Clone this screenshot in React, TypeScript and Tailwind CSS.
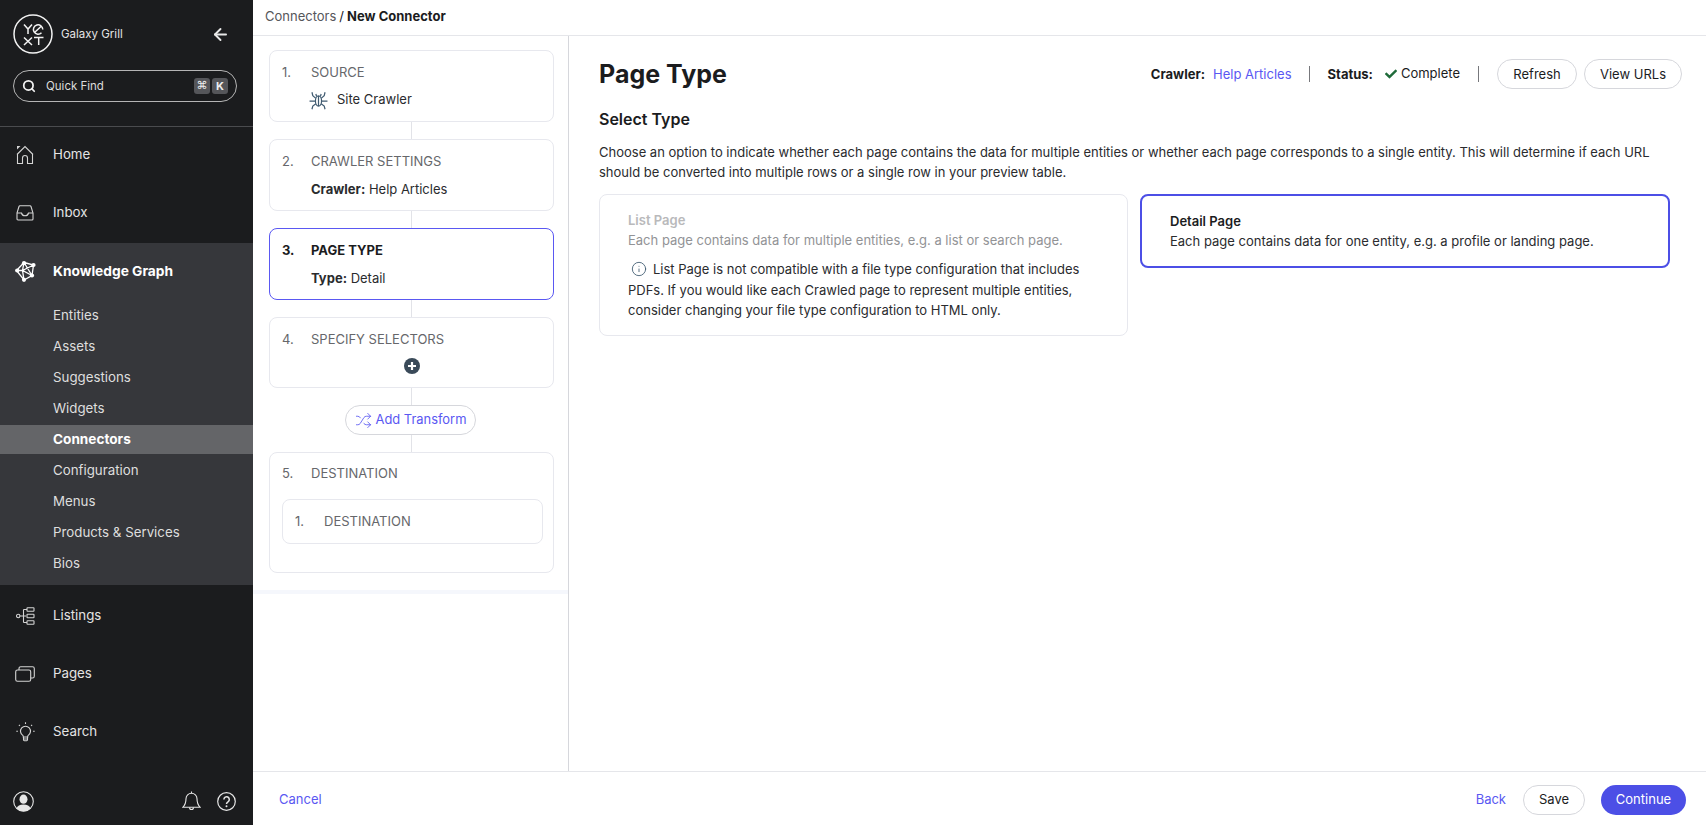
import type { ReactNode } from 'react'
import { ArrowLeft, Info, Search, Shuffle } from 'lucide-react'
import { FaCheck } from 'react-icons/fa'

const YextLogo = () => (
  <svg width="40" height="40" viewBox="0 0 40 40" fill="none" stroke="#f2f2f2" strokeWidth="1.5">
    <circle cx="20" cy="20" r="19" />
    <path d="M11 10.500l4 4.500 4-4.500M15 15v5" />
    <path d="M21.500 18.500l7-6.500M29.800 15.500a4.700 4.700 0 1 0-1.300 3.300" />
    <path d="M11 23.500l8 7.500M19 23.500L11 31" />
    <path d="M21 23.500h9.500M25.700 23.500V31" />
  </svg>
)

const HomeIcon = () => (
  <svg width="18" height="20" viewBox="0 0 18 20" fill="none" stroke="#d4d4d4" strokeWidth="1.1">
    <path d="M1 9.500L9 1.500l8 8M1.500 9v9.500h5V13a2.500 2.500 0 0 1 5 0v5.500h5V9" />
    <path d="M1 1h3.500L1 4.500z" fill="#d4d4d4" stroke="none" />
  </svg>
)

const InboxIcon = () => (
  <svg width="18" height="16" viewBox="0 0 18 16" fill="none" stroke="#d4d4d4" strokeWidth="1.1">
    <path d="M1 8l2-6.500a1 1 0 0 1 1-.7h10a1 1 0 0 1 1 .7L17 8v6a1 1 0 0 1-1 1H2a1 1 0 0 1-1-1z" />
    <path d="M1 8h4.500a3.600 3.600 0 0 0 7 0H17" />
  </svg>
)

const GraphIcon = () => (
  <svg width="21" height="21" viewBox="0 0 21 21" fill="none" stroke="#fff" strokeWidth="1.3">
    <path d="M9 1.500L18.500 4 17 14.500 9 19 1.500 9.500zM9 1.500L7.500 9.500 9 19M1.500 9.500h6L17 14.500M18.500 4L7.500 9.500M9 1.500l8 13" />
    <g fill="#fff" stroke="none">
      <circle cx="9" cy="2.200" r="2.100" />
      <circle cx="18.500" cy="4" r="2.100" />
      <circle cx="17" cy="14.500" r="2.100" />
      <circle cx="9" cy="18.800" r="2.100" />
      <circle cx="2.200" cy="9.500" r="2.100" />
    </g>
  </svg>
)

const ListingsIcon = () => (
  <svg width="19" height="18" viewBox="0 0 19 18" fill="none" stroke="#d4d4d4" strokeWidth="1.1">
    <circle cx="2.200" cy="9" r="1.700" />
    <path d="M4 9h6M7.500 2.500v13M7.500 2.500H11M7.500 15.500H11" />
    <rect x="11" y="0.700" width="7" height="3.600" rx="0.600" />
    <rect x="11" y="7.200" width="7" height="3.600" rx="0.600" />
    <rect x="11" y="13.700" width="7" height="3.600" rx="0.600" />
  </svg>
)

const PagesIcon = () => (
  <svg width="20" height="16" viewBox="0 0 20 16" fill="none" stroke="#d4d4d4" strokeWidth="1.1">
    <rect x="0.700" y="4" width="15" height="11.300" rx="1.800" />
    <path d="M4 4V2.500A1.800 1.800 0 0 1 5.800.7h11.700a1.800 1.800 0 0 1 1.800 1.800v7.700a1.800 1.800 0 0 1-1.800 1.800h-1.800" />
  </svg>
)

const BulbIcon = () => (
  <svg width="19" height="20" viewBox="0 0 19 20" fill="none" stroke="#d4d4d4" strokeWidth="1.1">
    <path d="M7.300 15a2 2 0 0 0-.5-1.600A5 5 0 1 1 12.200 13.400a2 2 0 0 0-.5 1.600z" />
    <path d="M7.500 15v2.800a.9.9 0 0 0 .9.9h2.200a.9.9 0 0 0 .9-.9V15M7.500 17h4" />
    <path d="M9.500.3v1.600M2.900 2.900l1 1M16.100 2.900l-1 1M.3 9.200h1.600M17.100 9.200h1.600" />
  </svg>
)

const AvatarIcon = () => (
  <svg width="21" height="21" viewBox="0 0 21 21" fill="none">
    <circle cx="10.500" cy="10.500" r="9.800" stroke="#e6e6e6" strokeWidth="1.100" />
    <ellipse cx="10.500" cy="8.200" rx="4" ry="4.600" fill="#e6e6e6" />
    <path d="M3.500 17.400c.7-2.900 3.400-4 7-4s6.300 1.100 7 4a9.800 9.800 0 0 1-14 0z" fill="#e6e6e6" />
  </svg>
)

const BellIcon = () => (
  <svg width="19" height="21" viewBox="0 0 19 21" fill="none" stroke="#e6e6e6" strokeWidth="1.100">
    <path d="M9.500 2.300a5.500 5.500 0 0 0-5.500 5.500c0 4.700-1 6.500-3.200 8.500h17.400C16 14.300 15 12.500 15 7.800a5.500 5.500 0 0 0-5.500-5.500z" />
    <path d="M9.500 .6v1.700M7.500 16.500a2 2 0 0 0 4 0" />
  </svg>
)

const HelpIcon = () => (
  <svg width="19" height="19" viewBox="0 0 19 19" fill="none" stroke="#e6e6e6" strokeWidth="1.200">
    <circle cx="9.500" cy="9.500" r="8.800" />
    <path d="M6.900 7.400a2.700 2.700 0 1 1 4.300 2.200c-1 .7-1.700 1.200-1.700 2.400" strokeWidth="1.500" />
    <circle cx="9.500" cy="14.300" r="1" fill="#e6e6e6" stroke="none" />
  </svg>
)

const SpiderIcon = () => (
  <svg width="19" height="19" viewBox="0 0 18 18" fill="none" stroke="#3f5a70" strokeWidth="1.150">
    <ellipse cx="9" cy="9.500" rx="2.900" ry="4.800" />
    <path d="M9 4.700v9.600M6.500 7L3.600 4.500 2.800 1.200M11.500 7l2.900-2.500.8-3.300M6.200 9.500H.5M11.800 9.500h5.700M6.500 12l-2.900 2.200L2.800 17.300M11.500 12l2.900 2.200.8 3.100M7.200 5.200L6.500 2.800M10.800 5.200l.7-2.400" />
  </svg>
)

const NavItem = ({ icon, label, className }: { icon: ReactNode; label: string; className?: string }) => (
  <div className={`flex h-[58px] items-center ${className ?? ''}`}>
    <div className="flex w-[53px] shrink-0 justify-center pr-[3px]">{icon}</div>
    <span className="text-[13.3px] text-[#e4e4e4]">{label}</span>
  </div>
)

const subItems = ['Entities', 'Assets', 'Suggestions', 'Widgets', 'Connectors', 'Configuration', 'Menus', 'Products & Services', 'Bios']

function Sidebar() {
  return (
    <aside className="flex h-screen w-[253px] shrink-0 flex-col bg-[#1b1c1e]">
      <div className="flex items-center pl-[13px] pr-[23px] pt-[14px]">
        <YextLogo />
        <span className="ml-[8px] pt-[2px] text-[11.5px] text-[#e4e4e4]">Galaxy Grill</span>
        <ArrowLeft className="ml-auto text-[#e8e8e8]" size={19} strokeWidth={2.4} />
      </div>
      <div className="mx-[13px] mt-[16px] flex h-[32px] w-[224px] items-center rounded-full border border-[#b5b5b5] pl-[8px] pr-[8px]">
        <Search className="text-[#f2f2f2]" size={14} strokeWidth={3} />
        <span className="ml-[10px] pt-[2px] text-[11.5px] text-[#dcdcdc]">Quick Find</span>
        <span className="ml-auto flex h-[16px] w-[16px] items-center justify-center rounded-[3px] bg-[#55565a] text-[11px] text-[#eeeeee] [font-family:'DejaVu_Sans',sans-serif]">⌘</span>
        <span className="ml-[2px] flex h-[16px] w-[16px] items-center justify-center rounded-[3px] bg-[#55565a] text-[11px] font-bold text-[#eeeeee]">K</span>
      </div>
      <div className="mt-[24px] border-t border-[#4a4b4e]">
        <NavItem icon={<HomeIcon />} label="Home" className="pb-[2px]" />
        <NavItem icon={<InboxIcon />} label="Inbox" className="pb-[2px]" />
      </div>
      <div className="bg-[#36373b] pb-[6px]">
        <div className="flex h-[57px] items-center pb-[1px]">
          <div className="flex w-[53px] shrink-0 justify-center pr-[3px]"><GraphIcon /></div>
          <span className="text-[13.75px] font-bold text-white">Knowledge Graph</span>
        </div>
        {subItems.map((item) => (
          <div
            key={item}
            className={
              item === 'Connectors'
                ? 'my-[1px] flex h-[29px] items-center bg-[#646568] pl-[53px] text-[13.6px] font-bold text-white'
                : 'flex h-[31px] items-center pl-[53px] text-[13.3px] text-[#dedede]'
            }
          >
            {item}
          </div>
        ))}
      </div>
      <NavItem icon={<ListingsIcon />} label="Listings" className="mt-[2px]" />
      <NavItem icon={<PagesIcon />} label="Pages" />
      <NavItem icon={<BulbIcon />} label="Search" />
      <div className="mt-auto flex items-center pb-[13px] pl-[13px] pr-[17px]">
        <AvatarIcon />
        <div className="ml-auto mr-[16px]"><BellIcon /></div>
        <HelpIcon />
      </div>
    </aside>
  )
}

const Line = () => <div className="h-[17px] w-px shrink-0 self-center bg-[#e2e3e8]" />

const StepCard = ({ num, title, active, className, children }: { num: string; title: string; active?: boolean; className?: string; children?: ReactNode }) => (
  <div className={`rounded-[8px] border ${active ? 'border-[#5a58f2]' : 'border-[#e7e8ee]'} ${className ?? ''}`}>
    <div className={`flex h-[20px] items-center pl-[12px] text-[13px] ${active ? 'font-bold text-[#1b1c1e]' : 'text-[#66676b]'}`}>
      <span className="w-[29px]">{num}</span>
      <span>{title}</span>
    </div>
    {children}
  </div>
)

function StepsPanel() {
  return (
    <div className="w-[316px] shrink-0 border-r border-[#d6d7dc]">
      <div className="flex flex-col border-b-4 border-[#f5f7fc] pb-[17px] pl-[16px] pr-[14px] pt-[14px]">
        <StepCard num="1." title="SOURCE" className="h-[72px] pt-[12px]">
          <div className="mt-[7px] flex h-[20px] items-center pl-[39px] text-[13px] text-[#2a2b2e]">
            <SpiderIcon />
            <span className="ml-[9px]">Site Crawler</span>
          </div>
        </StepCard>
        <Line />
        <StepCard num="2." title="CRAWLER SETTINGS" className="h-[72px] pt-[12px]">
          <div className="mt-[7px] h-[20px] pl-[41px] text-[13px] leading-[20px] text-[#2a2b2e]">
            <b className="font-bold">Crawler:</b> Help Articles
          </div>
        </StepCard>
        <Line />
        <StepCard num="3." title="PAGE TYPE" active className="h-[72px] pt-[12px]">
          <div className="mt-[7px] h-[20px] pl-[41px] text-[13px] leading-[20px] text-[#2a2b2e]">
            <b className="font-bold">Type:</b> Detail
          </div>
        </StepCard>
        <Line />
        <StepCard num="4." title="SPECIFY SELECTORS" className="h-[71px] pt-[12px]">
          <div className="mt-[8px] flex justify-center">
            <svg width="16" height="16" viewBox="0 0 16 16">
              <circle cx="8" cy="8" r="8" fill="#3a4a59" />
              <path d="M8 4v8M4 8h8" stroke="#fff" strokeWidth="2.200" />
            </svg>
          </div>
        </StepCard>
        <Line />
        <button className="mr-[2px] flex h-[30px] w-[131px] items-center justify-center self-center rounded-full border border-[#d6d7dc] text-[12.9px] text-[#5a58f2]">
          <Shuffle size={17} strokeWidth={1.2} />
          <span className="ml-[4px]">Add Transform</span>
        </button>
        <Line />
        <StepCard num="5." title="DESTINATION" className="h-[121px] pt-[11px]">
          <div className="ml-[12px] mr-[10px] mt-[15px] flex h-[45px] items-center rounded-[8px] border border-[#e7e8ee] pl-[12px] text-[13px] text-[#66676b]">
            <span className="w-[29px]">1.</span>
            <span>DESTINATION</span>
          </div>
        </StepCard>
      </div>
    </div>
  )
}

function TypePanel() {
  return (
    <div className="flex-1 pl-[30px] pr-[24px] pt-[23px] text-[#1b1c1e]">
      <div className="flex h-[30px] items-center">
        <h1 className="pt-[2px] text-[25px] font-bold">Page Type</h1>
        <div className="ml-auto flex items-center text-[13px]">
          <b className="pt-[2px] font-bold">Crawler:</b>
          <span className="ml-[8px] pt-[2px] text-[#5a58f2]">Help Articles</span>
          <span className="ml-[17px] mr-[18px] h-[16px] w-px bg-[#77787c]" />
          <b className="pt-[2px] font-bold">Status:</b>
          <FaCheck className="ml-[12px] text-[#1f6b3a]" size={12} />
          <span className="ml-[4px]">Complete</span>
          <span className="ml-[18px] mr-[18px] h-[16px] w-px bg-[#77787c]" />
          <button className="h-[30px] w-[80px] rounded-full border border-[#d6d7dc] pt-[1px]">Refresh</button>
          <button className="ml-[7px] h-[30px] w-[98px] rounded-full border border-[#d6d7dc] pt-[1px]">View URLs</button>
        </div>
      </div>
      <h2 className="mt-[20px] text-[16px] font-semibold leading-[20px]">Select Type</h2>
      <p className="mr-[12px] mt-[13px] text-[13px] leading-[20px] text-[#2a2b2e]">
        Choose an option to indicate whether each page contains the data for multiple entities or whether each page corresponds to a single entity. This will determine if each URL should be converted into multiple rows or a single row in your preview table.
      </p>
      <div className="mr-[12px] mt-[12px] grid grid-cols-[529px_530px] items-start gap-[12px]">
        <div className="h-[142px] rounded-[8px] border border-[#e7e8ee] pl-[28px] pr-[28px] pt-[15px] text-[13px] leading-[20px]">
          <div className="font-semibold text-[#b9b9bb]">List Page</div>
          <div className="text-[#929396]">Each page contains data for multiple entities, e.g. a list or search page.</div>
          <div className="mt-[9px] text-[#2a2b2e]">
            <Info className="mb-[3px] ml-[3px] mr-[6px] inline text-[#3f5a70]" size={16} strokeWidth={1.3} />
            List Page is not compatible with a file type configuration that includes PDFs. If you would like each Crawled page to represent multiple entities, consider changing your file type configuration to HTML only.
          </div>
        </div>
        <div className="h-[74px] rounded-[8px] border-2 border-[#4c4fe6] pl-[28px] pr-[28px] pt-[15px] text-[13px] leading-[20px]">
          <div className="font-semibold">Detail Page</div>
          <div className="text-[#2a2b2e]">Each page contains data for one entity, e.g. a profile or landing page.</div>
        </div>
      </div>
    </div>
  )
}

export default function App() {
  return (
    <div className="flex h-screen overflow-hidden bg-white font-['Inter',sans-serif]">
      <Sidebar />
      <main className="flex min-w-0 flex-1 flex-col">
        <div className="flex h-[36px] shrink-0 items-center border-b border-[#e5e6ea] pb-[2px] pl-[12px] text-[13px] text-[#55565a]">
          Connectors <span className="mx-[3px] text-[#1b1c1e]">/</span>
          <b className="font-bold text-[#1b1c1e]">New Connector</b>
        </div>
        <div className="flex min-h-0 flex-1">
          <StepsPanel />
          <TypePanel />
        </div>
        <div className="flex h-[54px] shrink-0 items-center border-t border-[#e5e6ea] pl-[26px] pr-[20px] pt-[2px] text-[13px]">
          <span className="text-[#5a58f2]">Cancel</span>
          <span className="ml-auto text-[#5a58f2]">Back</span>
          <button className="ml-[17px] h-[30px] w-[62px] rounded-full border border-[#d6d7dc] text-[#1b1c1e]">Save</button>
          <button className="ml-[16px] h-[30px] w-[85px] rounded-full bg-[#4c4fe6] text-white">Continue</button>
        </div>
      </main>
    </div>
  )
}
